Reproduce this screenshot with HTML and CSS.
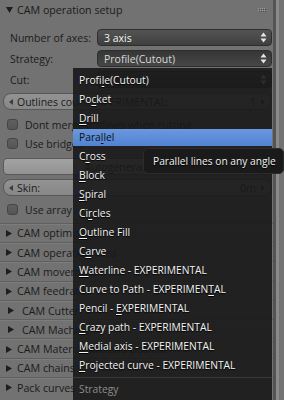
FILE: index.html
```html
<!DOCTYPE html>
<html>
<head>
<meta charset="utf-8">
<link rel="stylesheet" href="styles.css">
</head>
<body>
<div class="app">
  <div class="panel">
    <div class="phead first">
      <svg class="tri" width="7" height="6" viewBox="0 0 7 6"><polygon points="0,0 7,0 3.5,6"/></svg>
      <span class="ptitle">CAM operation setup</span>
      <svg class="grip" width="8" height="4" viewBox="0 0 8 4"><g fill="#9c9c9c"><rect x="0" y="0" width="1" height="1"/><rect x="2" y="0" width="1" height="1"/><rect x="4" y="0" width="1" height="1"/><rect x="6" y="0" width="1" height="1"/><rect x="0" y="2" width="1" height="1"/><rect x="2" y="2" width="1" height="1"/><rect x="4" y="2" width="1" height="1"/><rect x="6" y="2" width="1" height="1"/></g><g fill="#555"><rect x="1" y="1" width="1" height="1"/><rect x="3" y="1" width="1" height="1"/><rect x="5" y="1" width="1" height="1"/><rect x="7" y="1" width="1" height="1"/><rect x="1" y="3" width="1" height="1"/><rect x="3" y="3" width="1" height="1"/><rect x="5" y="3" width="1" height="1"/><rect x="7" y="3" width="1" height="1"/></g></svg>
    </div>
    <div class="pbody">
      <div class="row r1"><span class="lbl">Number of axes:</span><div class="dd"><span>3 axis</span><svg class="ud" width="7" height="11" viewBox="0 0 7 11"><polygon points="0.5,4.5 3.5,0.5 6.5,4.5"/><polygon points="0.5,6.5 3.5,10.5 6.5,6.5"/></svg></div></div>
      <div class="row"><span class="lbl">Strategy:</span><div class="dd open"><span>Profile(Cutout)</span><svg class="ud" width="7" height="11" viewBox="0 0 7 11"><polygon points="0.5,4.5 3.5,0.5 6.5,4.5"/><polygon points="0.5,6.5 3.5,10.5 6.5,6.5"/></svg></div></div>
      <div class="row"><span class="lbl">Cut:</span><div class="dd"><span></span><svg class="ud" width="7" height="11" viewBox="0 0 7 11"><polygon points="0.5,4.5 3.5,0.5 6.5,4.5"/><polygon points="0.5,6.5 3.5,10.5 6.5,6.5"/></svg></div></div>
      <div class="num n1">
        <svg class="arr" width="4" height="6" viewBox="0 0 4 6"><polygon points="4,0 0,3 4,6"/></svg>
        <span class="ntext">Outlines count EXPERIMENTAL:</span>
        <span class="nval">1</span>
        <svg class="arr" width="4" height="6" viewBox="0 0 4 6"><polygon points="0,0 4,3 0,6"/></svg>
      </div>
      <div class="chk c1"><span class="box"></span><span>Dont merge outlines when cutting</span></div>
      <div class="chk"><span class="box"></span><span>Use bridges</span></div>
      <div class="btn">Autogenerate bridges</div>
      <div class="num n2">
        <svg class="arr" width="4" height="6" viewBox="0 0 4 6"><polygon points="4,0 0,3 4,6"/></svg>
        <span class="ntext">Skin:</span>
        <span class="nval">0m</span>
        <svg class="arr" width="4" height="6" viewBox="0 0 4 6"><polygon points="0,0 4,3 0,6"/></svg>
      </div>
      <div class="chk c3"><span class="box"></span><span>Use array</span></div>
    </div>
    <div class="phead closed"><svg class="tri" width="6" height="7" viewBox="0 0 6 7"><polygon points="0,0 6,3.5 0,7"/></svg><span class="ptitle">CAM optimisation</span></div>
    <div class="phead closed"><svg class="tri" width="6" height="7" viewBox="0 0 6 7"><polygon points="0,0 6,3.5 0,7"/></svg><span class="ptitle">CAM operation area</span></div>
    <div class="phead closed"><svg class="tri" width="6" height="7" viewBox="0 0 6 7"><polygon points="0,0 6,3.5 0,7"/></svg><span class="ptitle">CAM movement</span></div>
    <div class="phead closed"><svg class="tri" width="6" height="7" viewBox="0 0 6 7"><polygon points="0,0 6,3.5 0,7"/></svg><span class="ptitle">CAM feedrate</span></div>
    <div class="phead closed sub"><svg class="tri" width="6" height="7" viewBox="0 0 6 7"><polygon points="0,0 6,3.5 0,7"/></svg><span class="ptitle">CAM Cutter</span></div>
    <div class="phead closed sub"><svg class="tri" width="6" height="7" viewBox="0 0 6 7"><polygon points="0,0 6,3.5 0,7"/></svg><span class="ptitle">CAM Machine</span></div>
    <div class="phead closed"><svg class="tri" width="6" height="7" viewBox="0 0 6 7"><polygon points="0,0 6,3.5 0,7"/></svg><span class="ptitle">CAM Material size and position</span></div>
    <div class="phead closed"><svg class="tri" width="6" height="7" viewBox="0 0 6 7"><polygon points="0,0 6,3.5 0,7"/></svg><span class="ptitle">CAM chains</span></div>
    <div class="phead closed"><svg class="tri" width="6" height="7" viewBox="0 0 6 7"><polygon points="0,0 6,3.5 0,7"/></svg><span class="ptitle">Pack curves</span></div>
  </div>
  <div class="side"><span class="s1"></span><span class="s2"></span><span class="s3"></span></div>
</div>

<div class="menu">
  <div class="item"><span>Profi<u>l</u>e(Cutout)</span></div>
  <div class="item"><span>Po<u>c</u>ket</span></div>
  <div class="item"><span><u>D</u>rill</span></div>
  <div class="item hl"><span>Para<u>l</u>lel</span></div>
  <div class="item"><span>C<u>r</u>oss</span></div>
  <div class="item"><span><u>B</u>lock</span></div>
  <div class="item"><span><u>S</u>piral</span></div>
  <div class="item"><span>Ci<u>r</u>cles</span></div>
  <div class="item"><span><u>O</u>utline Fill</span></div>
  <div class="item"><span>C<u>a</u>rve</span></div>
  <div class="item"><span><u>W</u>aterline - EXPERIMENTAL</span></div>
  <div class="item"><span>Curve to Path - EXPERIMEN<u>T</u>AL</span></div>
  <div class="item"><span>Pencil - <u>E</u>XPERIMENTAL</span></div>
  <div class="item"><span><u>C</u>razy path - EXPERIMENTAL</span></div>
  <div class="item"><span><u>M</u>edial axis - EXPERIMENTAL</span></div>
  <div class="item"><span><u>P</u>rojected curve - EXPERIMENTAL</span></div>
  <div class="sep"></div>
  <div class="item mtitle"><span>Strategy</span></div>
</div>

<div class="tip">Parallel lines on any angle</div>
</body>
</html>
```

FILE: styles.css
```css
html, body {
  margin: 0;
  padding: 0;
}
body {
  width: 284px;
  height: 400px;
  overflow: hidden;
  position: relative;
  background: #727272;
  font-family: "Open Sans", "Noto Sans", sans-serif;
  font-size: 10.5px;
  color: #1b1b1b;
}
.app {
  display: flex;
  height: 400px;
}
.panel {
  width: 273px;
  flex: none;
  display: flex;
  flex-direction: column;
}
.side {
  flex: 1;
  display: flex;
}
.side .s1 { width: 3px; background: #545454; }
.side .s2 { width: 3px; background: #8a8a8a; }
.side .s3 { flex: 1; background: #737373; }

.phead {
  display: flex;
  align-items: center;
  position: relative;
  box-sizing: border-box;
}
.phead.first {
  height: 20px;
  padding-left: 6px;
}
.phead .tri { fill: #1e1e1e; flex: none; }
.phead.first .ptitle { margin-left: 4px; font-size: 10.7px; }
.phead .grip { margin-left: auto; margin-right: 7px; }
.phead.closed {
  height: 19.3px;
  border-top: 1px solid #5f5f5f;
  box-shadow: inset 0 1px 0 #7c7c7c;
  padding-left: 6px;
  padding-top: 1px;
}
.phead.closed .ptitle { margin-left: 5px; font-size: 10.7px; }
.phead.sub { padding-left: 8px; }
.phead.sub .ptitle { margin-left: 8px; }

.pbody {
  display: flex;
  flex-direction: column;
  padding-bottom: 3.7px;
}
.row {
  display: flex;
  align-items: center;
  height: 17px;
  margin-top: 4px;
}
.row.r1 { margin-top: 9px; }
.lbl {
  flex: 0 0 97px;
  box-sizing: border-box;
  padding-left: 10px;
}
.dd {
  flex: none;
  width: 175px;
  height: 17px;
  box-sizing: border-box;
  border: 1px solid #2e2e2e;
  border-radius: 4px;
  background: linear-gradient(#545454, #3f3f3f);
  color: #f2f2f2;
  display: flex;
  align-items: center;
  justify-content: space-between;
  padding: 0 4px 0 6px;
}
.dd.open {
  background: linear-gradient(#363636, #474747);
  color: #d8d8d8;
}
.ud { fill: #e6e6e6; }

.num {
  height: 17px;
  box-sizing: border-box;
  margin: 5px 1px 0 3px;
  border: 1px solid #585858;
  border-radius: 8px;
  background: linear-gradient(#939393, #878787);
  display: flex;
  align-items: center;
  padding: 0 6px 0 5px;
}
.num.n2 { margin-top: 4px; }
.num .arr { fill: #3c3c3c; flex: none; }
.num .ntext { margin-left: 4px; }
.num .nval { margin-left: auto; margin-right: 5px; }

.chk {
  height: 19px;
  display: flex;
  align-items: center;
  padding-left: 7px;
}
.chk.c1 { margin-top: 5px; }
.chk.c3 { margin-top: 4px; }
.chk .box {
  width: 11px;
  height: 11px;
  box-sizing: border-box;
  border: 1px solid #454545;
  border-radius: 3px;
  background: linear-gradient(#606060, #555555);
  margin-right: 7px;
  flex: none;
}
.btn {
  height: 17px;
  box-sizing: border-box;
  margin: 5px 1px 0 3px;
  border: 1px solid #5a5a5a;
  border-radius: 4px;
  background: linear-gradient(#a2a2a2, #939393);
  display: flex;
  align-items: center;
  justify-content: center;
}

.menu {
  position: absolute;
  left: 73px;
  top: 68px;
  width: 199px;
  height: 340px;
  background: rgba(24, 24, 24, 0.9);
  display: flex;
  flex-direction: column;
  padding-top: 2.5px;
  box-sizing: border-box;
  font-size: 10.3px;
}
.item {
  height: 17px;
  margin: 1px 0;
  display: flex;
  align-items: center;
  padding-left: 6px;
  color: #f4f4f4;
  text-shadow: 0 1px 1px #000;
  white-space: pre;
  flex: none;
}
.item u {
  text-decoration: underline;
  text-decoration-thickness: 1px;
  text-underline-offset: 2px;
}
.item.hl {
  background: linear-gradient(#6a98e0, #5183d2);
  color: #0e0e0e;
  text-shadow: none;
}
.sep {
  height: 1px;
  background: #3a3a3a;
  margin: 2px 0 2px;
  flex: none;
}
.item.mtitle {
  color: #8c8c8c;
  text-shadow: none;
}

.tip {
  position: absolute;
  left: 143px;
  top: 148px;
  width: 141px;
  height: 26px;
  box-sizing: border-box;
  background: #1a1a1a;
  border: 1px solid #2c2c2c;
  border-radius: 5px;
  color: #f2f2f2;
  text-shadow: 0 1px 1px #000;
  display: flex;
  align-items: center;
  padding-left: 9px;
  white-space: nowrap;
  font-size: 10.2px;
}
```
